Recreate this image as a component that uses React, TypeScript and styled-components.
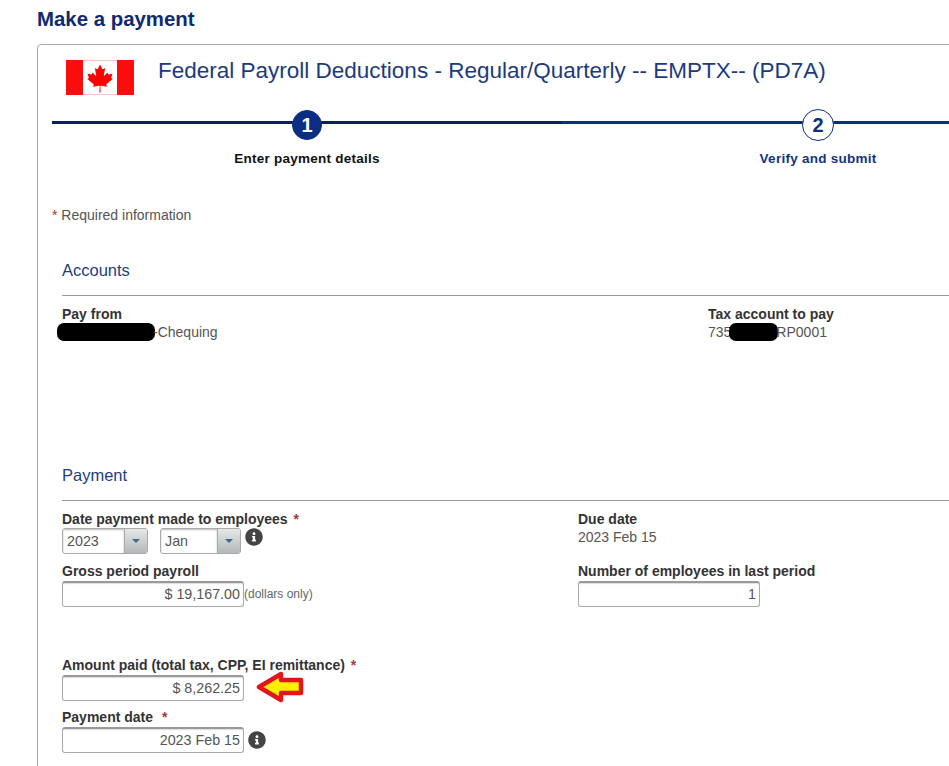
import React from 'react';
import styled, { createGlobalStyle } from 'styled-components';
import { FaInfoCircle } from 'react-icons/fa';

const GlobalStyle = createGlobalStyle`
  html, body {
    margin: 0;
    padding: 0;
    background: #fff;
    overflow: hidden;
  }
  body {
    width: 949px;
    height: 766px;
    font-family: "Liberation Sans", Arial, sans-serif;
  }
`;

const Page = styled.div`
  width: 949px;
  height: 766px;
  overflow: hidden;
  padding: 8px 0 0 37px;
  box-sizing: border-box;
`;
const PageTitle = styled.h1`
  margin: 0 0 14px;
  font-size: 20.4px;
  line-height: 22px;
  font-weight: 700;
  color: #0f2a70;
`;
const Card = styled.div`
  width: 1080px;
  height: 760px;
  box-sizing: border-box;
  border: 1px solid #aaa;
  border-radius: 4px;
  padding: 15px 14px 0;
`;
const Header = styled.div`
  display: flex;
  align-items: flex-start;
  gap: 24px;
  padding-left: 14px;
  height: 49px;
`;
const PayeeName = styled.h2`
  margin: 0;
  font-size: 22.5px;
  line-height: 22px;
  font-weight: 400;
  color: #1c3b7c;
`;
const Stepper = styled.div`
  display: grid;
  grid-template-columns: 510px 510px;
  width: 1020px;
`;
const Step = styled.div<{ $active?: boolean }>`
  position: relative;
  display: flex;
  flex-direction: column;
  align-items: center;
  height: 60px;
  padding-left: ${(p) => (p.$active ? '0' : '2px')};
  &::before {
    content: '';
    position: absolute;
    left: 0;
    right: 0;
    top: 12px;
    height: 3px;
    background: ${(p) => (p.$active ? '#0a1f5e' : '#0c2f7e')};
  }
`;
const StepDot = styled.div<{ $active?: boolean }>`
  position: relative;
  width: ${(p) => (p.$active ? '30px' : '32px')};
  height: ${(p) => (p.$active ? '30px' : '32px')};
  margin-top: ${(p) => (p.$active ? '1px' : '0')};
  box-sizing: border-box;
  border-radius: 50%;
  border: 1px solid #0c2f7e;
  background: ${(p) => (p.$active ? '#0b2d84' : '#fff')};
  color: ${(p) => (p.$active ? '#fff' : '#0c2f7e')};
  font-size: 20px;
  font-weight: 700;
  line-height: ${(p) => (p.$active ? '28px' : '30px')};
  text-align: center;
`;
const StepLabel = styled.div<{ $active?: boolean }>`
  margin-top: ${(p) => (p.$active ? '11px' : '10px')};
  font-size: 13.5px;
  line-height: 16px;
  font-weight: 700;
  letter-spacing: 0.25px;
  color: ${(p) => (p.$active ? '#111' : '#12357f')};
`;
const Required = styled.div`
  margin-top: 38px;
  font-size: 14px;
  line-height: 16px;
  color: #555;
`;
const Star = styled.span<{ $gap?: number }>`
  color: #a33;
  margin-left: ${(p) => p.$gap ?? 0}px;
`;
const Section = styled.section<{ $top: number; $height: number }>`
  margin-top: ${(p) => p.$top}px;
  height: ${(p) => p.$height}px;
  padding-left: 10px;
`;
const SectionTitle = styled.h3`
  margin: 0;
  padding-bottom: 17px;
  border-bottom: 1px solid #999;
  font-size: 16.5px;
  line-height: 16px;
  font-weight: 400;
  color: #1c4080;
`;
const Columns = styled.div<{ $first: number }>`
  display: grid;
  grid-template-columns: ${(p) => p.$first}px 1fr;
  padding-top: 10px;
`;
const Column = styled.div`
  display: flex;
  flex-direction: column;
`;
const Label = styled.div<{ $top?: number }>`
  margin-top: ${(p) => p.$top ?? 0}px;
  font-size: 14px;
  line-height: 16px;
  font-weight: 700;
  color: #333;
`;
const Value = styled.div`
  margin-top: 1px;
  font-size: 14px;
  line-height: 18px;
  color: #555;
  white-space: nowrap;
`;
const Redacted = styled.span<{ $width: number; $shift?: number }>`
  display: inline-block;
  vertical-align: middle;
  width: ${(p) => p.$width}px;
  height: 18px;
  margin: -2px -2px 0 ${(p) => p.$shift ?? 0}px;
  background: #000;
  border-radius: 7px;
`;
const FieldRow = styled.div<{ $gap?: number }>`
  display: flex;
  align-items: center;
  gap: ${(p) => p.$gap ?? 0}px;
  margin-top: 2px;
`;
const Select = styled.div<{ $width: number }>`
  display: flex;
  width: ${(p) => p.$width}px;
  height: 26px;
  box-sizing: border-box;
  border: 1px solid #aaa;
  border-radius: 3px;
  overflow: hidden;
  font-size: 14.3px;
  line-height: 25px;
  color: #555;
`;
const SelectText = styled.div`
  flex: 1;
  padding-left: 4px;
  box-shadow: inset 0 1px 2px #bbb;
`;
const SelectButton = styled.div`
  display: flex;
  align-items: center;
  justify-content: center;
  width: 22px;
  background: linear-gradient(#e6e8e8, #b4b8b8);
  border-left: 1px solid #aaa;
  &::after {
    content: '';
    border-left: 4px solid transparent;
    border-right: 4px solid transparent;
    border-top: 4px solid #3a6a8c;
  }
`;
const DateSelects = styled.div`
  display: flex;
  align-items: flex-start;
  gap: 12px;
  height: 26px;
  margin-top: 1px;
`;
const Info = styled(FaInfoCircle)<{ $lift?: boolean }>`
  flex: none;
  width: 18px;
  height: 18px;
  color: #444;
  margin-left: ${(p) => (p.$lift ? '-8px' : '0')};
`;
const TextBox = styled.div`
  width: 182px;
  height: 26px;
  box-sizing: border-box;
  border: 1px solid #aaa;
  border-top: 2px solid #999;
  border-radius: 3px;
  padding-right: 3px;
  font-size: 14.3px;
  line-height: 23px;
  text-align: right;
  color: #555;
  box-shadow: inset 0 1px 1px #ddd;
`;
const Hint = styled.span`
  font-size: 12px;
  color: #666;
`;
const ArrowMark = styled.svg`
  flex: none;
  width: 50px;
  height: 34px;
  margin: -4px 0;
`;

const MapleFlag = () => (
  <svg width="68" height="35" viewBox="0 0 68 35" style={{ flex: 'none' }}>
    <rect x="0.5" y="0.5" width="67" height="34" fill="#fff" stroke="#f0c8c8" />
    <rect width="17" height="35" fill="#fb0d0d" />
    <rect x="51" width="17" height="35" fill="#fb0d0d" />
    <svg x="20" y="4" width="28" height="29" viewBox="-2015 -2000 4030 4030">
      <path
        fill="#f00"
        d="m-90 2030 45-863a95 95 0 0 0-111-98l-859 151 116-320a65 65 0 0 0-20-73l-941-762 212-99a65 65 0 0 0 34-79l-186-572 542 115a65 65 0 0 0 73-38l105-247 423 454a65 65 0 0 0 111-57l-204-1052 327 189a65 65 0 0 0 91-27l332-652 332 652a65 65 0 0 0 91 27l327-189-204 1052a65 65 0 0 0 111 57l423-454 105 247a65 65 0 0 0 73 38l542-115-186 572a65 65 0 0 0 34 79l212 99-941 762a65 65 0 0 0-20 73l116 320-859-151a95 95 0 0 0-111 98l45 863z"
      />
    </svg>
  </svg>
);

const Arrow = () => (
  <ArrowMark viewBox="0 0 50 34">
    <path
      d="M4 16 L26 3 L26 9 L46 9 L46 22 L26 22 L26 29 Z"
      fill="#ffee00"
      stroke="#e2141c"
      strokeWidth="4.5"
      strokeLinejoin="round"
    />
  </ArrowMark>
);

const App: React.FC = () => {
  return (
    <Page>
      <GlobalStyle />
      <PageTitle>Make a payment</PageTitle>
      <Card>
        <Header>
          <MapleFlag />
          <PayeeName>Federal Payroll Deductions - Regular/Quarterly -- EMPTX-- (PD7A)</PayeeName>
        </Header>
        <Stepper>
          <Step $active>
            <StepDot $active>1</StepDot>
            <StepLabel $active>Enter payment details</StepLabel>
          </Step>
          <Step>
            <StepDot>2</StepDot>
            <StepLabel>Verify and submit</StepLabel>
          </Step>
        </Stepper>
        <Required>
          <Star>*</Star> Required information
        </Required>
        <Section $top={39} $height={205}>
          <SectionTitle>Accounts</SectionTitle>
          <Columns $first={646}>
            <Column>
              <Label>Pay from</Label>
              <Value>
                <Redacted $width={98} $shift={-5} />
                -Chequing
              </Value>
            </Column>
            <Column>
              <Label>Tax account to pay</Label>
              <Value>
                735
                <Redacted $width={49} $shift={-2} />
                RP0001
              </Value>
            </Column>
          </Columns>
        </Section>
        <Section $top={0} $height={300}>
          <SectionTitle>Payment</SectionTitle>
          <Columns $first={516}>
            <Column>
              <Label>Date payment made to employees <Star $gap={2}>*</Star></Label>
              <DateSelects>
                <Select $width={86}>
                  <SelectText>2023</SelectText>
                  <SelectButton />
                </Select>
                <Select $width={81}>
                  <SelectText>Jan</SelectText>
                  <SelectButton />
                </Select>
                <Info $lift />
              </DateSelects>
              <Label $top={9}>Gross period payroll</Label>
              <FieldRow>
                <TextBox>$ 19,167.00</TextBox>
                <Hint>(dollars only)</Hint>
              </FieldRow>
              <Label $top={50}>Amount paid (total tax, CPP, EI remittance) <Star $gap={2}>*</Star></Label>
              <FieldRow $gap={11}>
                <TextBox>$ 8,262.25</TextBox>
                <Arrow />
              </FieldRow>
              <Label $top={8}>Payment date <Star $gap={5}>*</Star></Label>
              <FieldRow $gap={4}>
                <TextBox>2023 Feb 15</TextBox>
                <Info />
              </FieldRow>
            </Column>
            <Column>
              <Label>Due date</Label>
              <Value>2023 Feb 15</Value>
              <Label $top={17}>Number of employees in last period</Label>
              <FieldRow>
                <TextBox>1</TextBox>
              </FieldRow>
            </Column>
          </Columns>
        </Section>
      </Card>
    </Page>
  );
};

export default App;
